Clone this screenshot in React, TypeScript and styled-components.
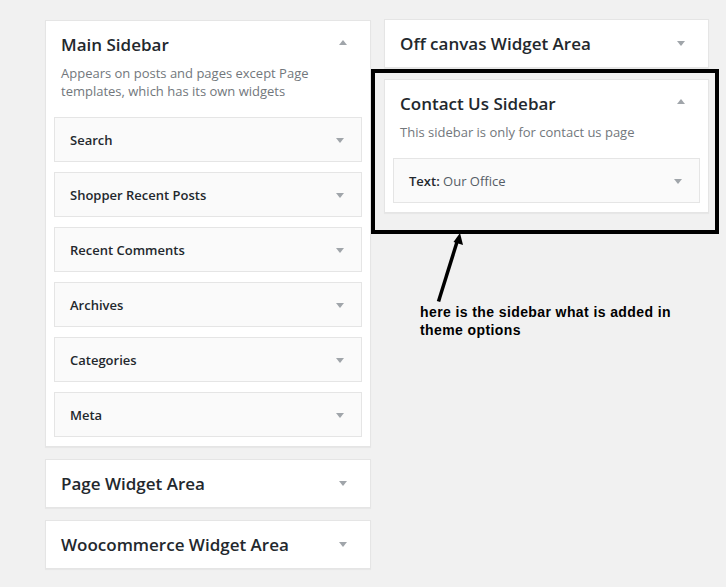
import styled, { createGlobalStyle } from 'styled-components';

const GlobalStyle = createGlobalStyle`
  html, body {
    margin: 0;
    padding: 0;
    background: #f1f1f1;
  }
  body {
    font-family: 'Open Sans', 'Noto Sans', sans-serif;
    color: #23282d;
  }
`;

const Page = styled.div`
  position: relative;
  width: 726px;
  height: 587px;
  box-sizing: border-box;
  padding: 19px 0 0 45px;
  display: flex;
  align-items: flex-start;
  gap: 13px;
  overflow: hidden;
`;

const Column = styled.div<{ $width: number; $top?: number; $gap: number }>`
  width: ${({ $width }) => $width}px;
  margin-top: ${({ $top }) => $top ?? 0}px;
  display: flex;
  flex-direction: column;
  gap: ${({ $gap }) => $gap}px;
`;

const Panel = styled.div`
  background: #fff;
  border: 1px solid #e5e5e5;
  box-shadow: 0 1px 1px rgba(0, 0, 0, 0.04);
`;

const PanelHeader = styled.div<{ $open: boolean }>`
  display: flex;
  justify-content: space-between;
  align-items: flex-start;
  padding: 12px 15px ${({ $open }) => ($open ? 0 : 12)}px;
`;

const PanelTitle = styled.h2`
  margin: 0;
  font-size: 17px;
  line-height: 23px;
  font-weight: 600;
  color: #23282d;
`;

const Description = styled.p`
  margin: 8px 0 0;
  padding: 0 15px;
  font-size: 13px;
  line-height: 18px;
  color: #72777c;
`;

const WidgetList = styled.div`
  display: flex;
  flex-direction: column;
  gap: 10px;
  padding: 17px 8px 9px;
`;

const Widget = styled.div`
  height: 43px;
  background: #fafafa;
  border: 1px solid #e5e5e5;
  display: flex;
  align-items: center;
  justify-content: space-between;
  padding: 0 17px 0 15px;
`;

const WidgetTitle = styled.h3`
  margin: 0;
  font-size: 13px;
  font-weight: 600;
  color: #23282d;
`;

const InTitle = styled.span`
  font-weight: 400;
  color: #555d66;
`;

const Toggle = styled.svg<{ $offset: number; $right: number }>`
  display: block;
  width: 8px;
  height: 5px;
  flex: none;
  margin-top: ${({ $offset }) => $offset}px;
  margin-right: ${({ $right }) => $right}px;
`;

const Highlight = styled.div`
  position: absolute;
  left: 371px;
  top: 69px;
  width: 348px;
  height: 165px;
  box-sizing: border-box;
  border: 4px solid #000;
  pointer-events: none;
`;

const Pointer = styled.svg`
  position: absolute;
  left: 430px;
  top: 228px;
  width: 40px;
  height: 80px;
`;

const Note = styled.div`
  position: absolute;
  left: 420px;
  top: 303px;
  width: 280px;
  font-family: 'Liberation Sans', Arial, sans-serif;
  font-weight: 700;
  font-size: 14px;
  line-height: 18px;
  letter-spacing: 0.4px;
  color: #000;
`;

const Arrow = ({ up, offset, right }: { up?: boolean; offset: number; right: number }) => (
  <Toggle viewBox="0 0 8 5" $offset={offset} $right={right}>
    <polygon points={up ? '0,5 8,5 4,0' : '0,0 8,0 4,5'} fill="#a0a5aa" />
  </Toggle>
);

type Area = {
  name: string;
  description?: string;
  widgets?: { title: string; detail?: string }[];
};

const SidebarPanel = ({ name, description, widgets }: Area) => {
  const open = !!widgets;
  return (
    <Panel>
      <PanelHeader $open={open}>
        <PanelTitle>{name}</PanelTitle>
        <Arrow up={open} offset={open ? 7 : 9} right={8} />
      </PanelHeader>
      {description && <Description>{description}</Description>}
      {widgets && (
        <WidgetList>
          {widgets.map((w) => (
            <Widget key={w.title}>
              <WidgetTitle>
                {w.title}
                {w.detail && <InTitle>{w.detail}</InTitle>}
              </WidgetTitle>
              <Arrow offset={2} right={0} />
            </Widget>
          ))}
        </WidgetList>
      )}
    </Panel>
  );
};

const leftAreas: Area[] = [
  {
    name: 'Main Sidebar',
    description: 'Appears on posts and pages except Page templates, which has its own widgets',
    widgets: [
      { title: 'Search' },
      { title: 'Shopper Recent Posts' },
      { title: 'Recent Comments' },
      { title: 'Archives' },
      { title: 'Categories' },
      { title: 'Meta' },
    ],
  },
  { name: 'Page Widget Area' },
  { name: 'Woocommerce Widget Area' },
];

const rightAreas: Area[] = [
  { name: 'Off canvas Widget Area' },
  {
    name: 'Contact Us Sidebar',
    description: 'This sidebar is only for contact us page',
    widgets: [{ title: 'Text:', detail: ' Our Office' }],
  },
];

const App = () => (
  <>
    <GlobalStyle />
    <Page>
      <Column $width={326} $top={1} $gap={12}>
        {leftAreas.map((a) => (
          <SidebarPanel key={a.name} {...a} />
        ))}
      </Column>
      <Column $width={325} $gap={11}>
        {rightAreas.map((a) => (
          <SidebarPanel key={a.name} {...a} />
        ))}
      </Column>
      <Highlight />
      <Pointer viewBox="0 0 40 80">
        <line x1="8.5" y1="73.5" x2="27" y2="14" stroke="#000" strokeWidth="3.5" />
        <polygon points="30,5 23.5,14 33,17" fill="#000" />
      </Pointer>
      <Note>here is the sidebar what is added in theme options</Note>
    </Page>
  </>
);

export default App;
